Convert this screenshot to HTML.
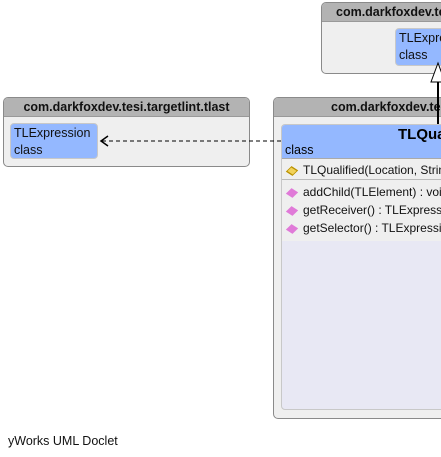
<!DOCTYPE html>
<html><head><style>
html,body{margin:0;width:441px;height:457px;overflow:hidden}
body{background:#fff;font-family:"Liberation Sans","DejaVu Sans",sans-serif;position:relative}
#w{position:absolute;left:0;top:0;width:441px;height:457px;overflow:hidden}
.pk{position:absolute;background:#efefef;border:1px solid #8a8a8a;border-radius:5px;overflow:hidden}
.ph{height:18px;background:#b3b3b3;border-bottom:1px solid #999;font-weight:bold;font-size:12.5px;text-align:center;line-height:18px;color:#111;white-space:nowrap}
.cb{position:absolute;background:#94b8ff;border:1px solid #c8c8c8;border-radius:4px;font-size:12.5px;line-height:17px;padding:1px 3px;color:#111;white-space:nowrap;overflow:hidden}
.row{font-size:12px;line-height:18px;white-space:nowrap;padding-left:5px;color:#111}
.ic{display:inline-block;width:10px;height:6px;background:#e07ad8;transform:skewX(-30deg) rotate(25deg);margin-right:6px;vertical-align:middle}
</style></head><body><div id="w">
<div class="pk" style="left:321px;top:2px;width:130px;height:70px"><div class="ph" style="text-align:left;padding-left:14px">com.darkfoxdev.tesi</div></div>
<div class="cb" style="left:395px;top:28px;width:60px;height:34px">TLExpression<br>class</div>
<div class="pk" style="left:3px;top:97px;width:245px;height:68px"><div class="ph">com.darkfoxdev.tesi.targetlint.tlast</div></div>
<div class="cb" style="left:10px;top:123px;width:80px;height:32px">TLExpression<br>class</div>
<div class="pk" style="left:273px;top:97px;width:180px;height:320px"><div class="ph" style="text-align:left;padding-left:57px">com.darkfoxdev.tesi</div></div>
<div style="position:absolute;left:281px;top:124px;width:170px;height:284px;background:#e8e8f4;border:1px solid #c8c8c8;border-radius:4px;overflow:hidden">
<div style="background:#94b8ff;height:33px;position:relative;border-bottom:1px solid #aaa">
<div style="position:absolute;left:116px;top:1px;font-weight:bold;font-size:15px">TLQualified</div>
<div style="position:absolute;left:3px;top:18px;font-size:12.5px">class</div></div>
<div class="row" style="background:#efefef;border-bottom:1px solid #bbb;padding-top:2px"><span class="ic" style="background:#f2d25a;border:1px solid #b89000;width:8px;height:4px"></span>TLQualified(Location, String)</div>
<div style="background:#efefef;padding-top:3px">
<div class="row"><span class="ic"></span>addChild(TLElement) : void</div>
<div class="row"><span class="ic"></span>getReceiver() : TLExpression</div>
<div class="row"><span class="ic"></span>getSelector() : TLExpression</div>
<div style="height:4px"></div></div>
</div>
<svg style="position:absolute;left:0;top:0" width="441" height="457">
<line x1="102" y1="141" x2="281" y2="141" stroke="#000" stroke-dasharray="4,3"/>
<polyline points="108,136 101,141 108,146" fill="none" stroke="#000" stroke-width="1.5"/>
<line x1="438" y1="82" x2="438" y2="124" stroke="#000" stroke-width="2"/>
<polygon points="438,63 431,82 445,82" fill="#fff" stroke="#000"/>
</svg>
<div style="position:absolute;left:8px;top:434px;font-size:12.5px;color:#111">yWorks UML Doclet</div>
</div></body></html>
